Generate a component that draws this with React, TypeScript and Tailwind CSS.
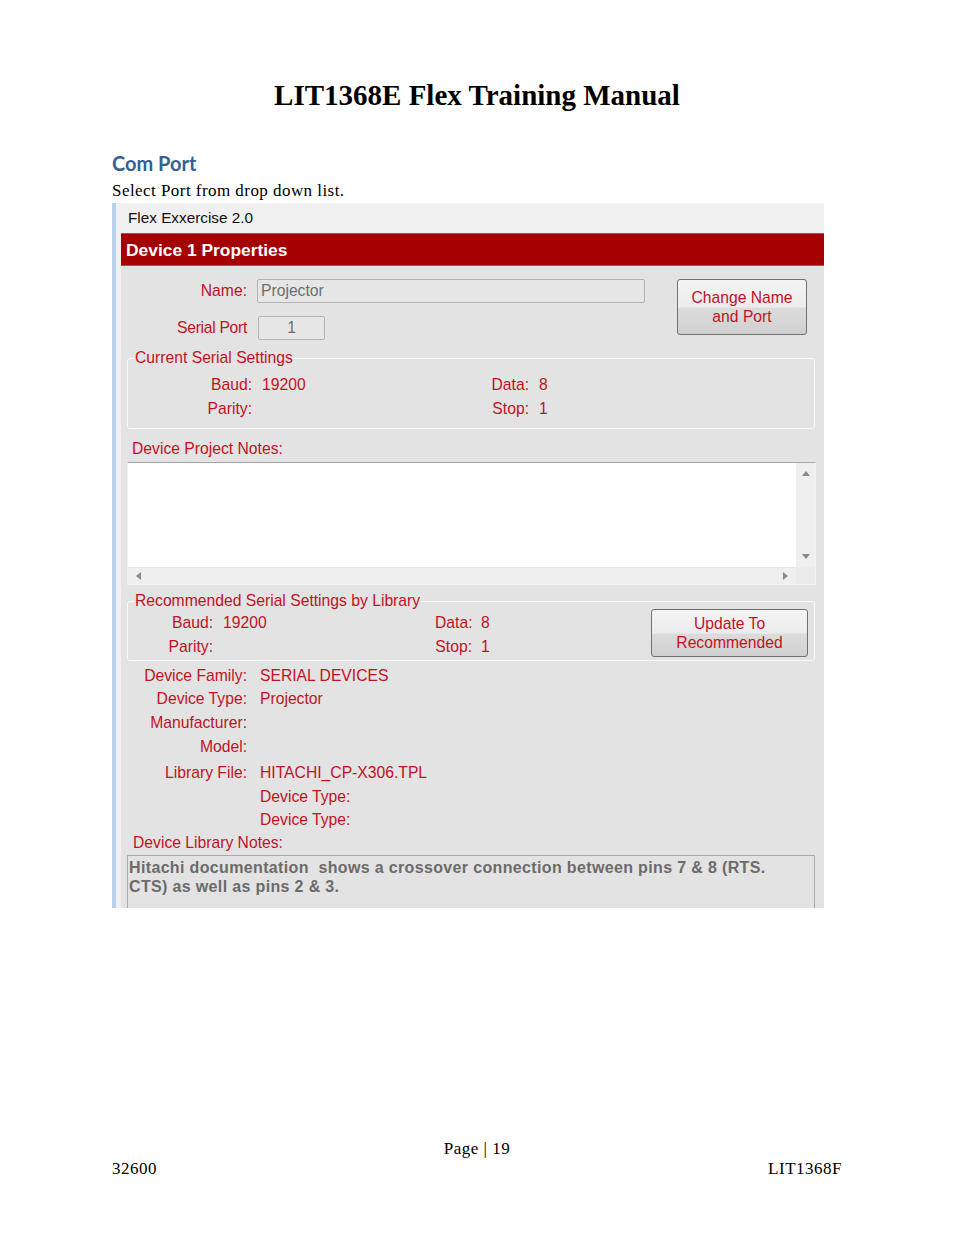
import React from "react";

const RED = "text-[#c1121f]";

function Row({ label, value, h = "h-[23.6px]" }: { label: string; value?: string; h?: string }) {
  return (
    <div className={`flex items-center ${h}`}>
      <div className={`w-[126px] text-right ${RED}`}>{label}</div>
      <div className={`ml-[13px] ${RED}`}>{value}</div>
    </div>
  );
}

function Tri({ dir }: { dir: "up" | "down" | "left" | "right" }) {
  const pts = {
    up: "0,5 4,0 8,5",
    down: "0,0 8,0 4,5",
    left: "5,0 5,8 0,4",
    right: "0,0 0,8 5,4",
  }[dir];
  const w = dir === "up" || dir === "down" ? 8 : 5;
  const h = dir === "up" || dir === "down" ? 5 : 8;
  return (
    <svg width={w} height={h} viewBox={`0 0 ${w} ${h}`}>
      <polygon points={pts} fill="#8a8a8a" />
    </svg>
  );
}

export default function App() {
  return (
    <div className="w-[954px] h-[1235px] bg-white flex flex-col font-['Liberation_Serif',serif] text-black">
      <h1 className="pt-[77px] text-center text-[29px] leading-[36px] font-bold">
        LIT1368E Flex Training Manual
      </h1>
      <h2 className="mt-[38px] ml-[112px] text-[20px] leading-[24px] font-bold text-[#365f91] font-['Lato',sans-serif]">
        Com Port
      </h2>
      <p className="mt-[5px] ml-[112px] text-[17px] leading-[21px] tracking-[0.45px]">Select Port from drop down list.</p>

      {/* Screenshot panel */}
      <div className="mt-[2px] ml-[112px] w-[712px] h-[705px] flex font-['Liberation_Sans',sans-serif] text-[15.7px] leading-[18px] overflow-hidden">
        <div className="w-[4px] bg-[#b9d1ea]" />
        <div className="flex-1 flex flex-col">
          <div className="h-[30px] bg-[#f0f0f0] flex items-center pl-[12px] text-[#111] text-[15.3px]">
            Flex Exxercise 2.0
          </div>
          <div className="flex-1 flex min-h-0">
            <div className="w-[5px] bg-[#f0f0f0]" />
            <div className="flex-1 flex flex-col min-h-0">
              <div className="h-[33px] bg-[#a50000] border-y border-[#6a6a6a] flex items-center pl-[5px] text-white font-bold text-[17.4px]">
                Device 1 Properties
              </div>
              <div className="flex-1 bg-[#e3e3e3] flex flex-col min-h-0">
                {/* Name & port */}
                <div className="pt-[13px] flex items-start">
                  <div className="flex flex-col">
                    <div className="flex items-center h-[24px]">
                      <div className={`w-[126px] text-right ${RED}`}>Name:</div>
                      <div className="ml-[10px] w-[388px] h-[24px] border border-[#b3b3b3] bg-[#e6e6e6] rounded-[2px] flex items-center pl-[3px] text-[#6d6d6d]">
                        Projector
                      </div>
                    </div>
                    <div className="flex items-center h-[24px] mt-[13px]">
                      <div className={`w-[126px] text-right ${RED} tracking-[-0.3px]`}>Serial Port</div>
                      <div className="ml-[11px] w-[67px] h-[24px] border border-[#b3b3b3] bg-[#e6e6e6] rounded-[2px] flex items-center justify-center text-[#6d6d6d]">
                        1
                      </div>
                    </div>
                  </div>
                  <button className={`ml-[32px] w-[130px] h-[56px] border border-[#707070] rounded-[3px] bg-[linear-gradient(#f4f4f4_0%,#ececec_50%,#dcdcdc_52%,#d0d0d0_100%)] ${RED} leading-[19px] text-[15.7px]`}>
                    Change Name
                    <br />
                    and Port
                  </button>
                </div>

                {/* Current Serial Settings */}
                <fieldset className="mt-[9px] ml-[6px] w-[688px] border border-[#fafafa] rounded-[3px] pb-[7px]">
                  <legend className={`ml-[6px] px-[1px] ${RED}`}>Current Serial Settings</legend>
                  <div className="pt-[6px]">
                    <div className="flex items-center h-[24px]">
                      <div className={`w-[124px] text-right ${RED}`}>Baud:</div>
                      <div className={`ml-[10px] w-[220px] ${RED}`}>19200</div>
                      <div className={`w-[47px] text-right ${RED}`}>Data:</div>
                      <div className={`ml-[10px] ${RED}`}>8</div>
                    </div>
                    <div className="flex items-center h-[24px]">
                      <div className={`w-[124px] text-right ${RED}`}>Parity:</div>
                      <div className="ml-[10px] w-[220px]" />
                      <div className={`w-[47px] text-right ${RED}`}>Stop:</div>
                      <div className={`ml-[10px] ${RED}`}>1</div>
                    </div>
                  </div>
                </fieldset>

                <div className={`mt-[11px] ml-[11px] ${RED}`}>Device Project Notes:</div>

                {/* Notes box */}
                <div className="mt-[4px] ml-[6px] w-[689px] h-[123px] border border-[#f2f2f2] border-t-[#a6a6a6] flex flex-col shrink-0">
                  <div className="flex-1 flex">
                    <div className="flex-1 bg-white" />
                    <div className="w-[19px] bg-[#efefef] flex flex-col items-center justify-between py-[8px]">
                      <Tri dir="up" />
                      <Tri dir="down" />
                    </div>
                  </div>
                  <div className="h-[17px] flex">
                    <div className="flex-1 bg-[#efefef] flex items-center justify-between px-[8px] border-t border-[#e6e6e6]">
                      <Tri dir="left" />
                      <Tri dir="right" />
                    </div>
                    <div className="w-[19px] bg-[#ebebeb]" />
                  </div>
                </div>

                {/* Recommended */}
                <fieldset className="mt-[7px] ml-[6px] w-[688px] border border-[#fafafa] rounded-[3px] shrink-0">
                  <legend className={`ml-[6px] px-[1px] ${RED}`}>
                    Recommended Serial Settings by Library
                  </legend>
                  <div className="flex items-start h-[50px]">
                    <div className="flex flex-col pt-[1px]">
                      <div className="flex items-center h-[24px]">
                        <div className={`w-[85px] text-right ${RED}`}>Baud:</div>
                        <div className={`ml-[10px] w-[212px] ${RED}`}>19200</div>
                        <div className={`w-[37px] text-right ${RED}`}>Data:</div>
                        <div className={`ml-[9px] ${RED}`}>8</div>
                      </div>
                      <div className="flex items-center h-[24px]">
                        <div className={`w-[85px] text-right ${RED}`}>Parity:</div>
                        <div className="ml-[10px] w-[212px]" />
                        <div className={`w-[37px] text-right ${RED}`}>Stop:</div>
                        <div className={`ml-[9px] ${RED}`}>1</div>
                      </div>
                    </div>
                    <button className={`ml-auto mr-[6px] -mt-[1px] w-[157px] h-[48px] border border-[#707070] rounded-[3px] bg-[linear-gradient(#f4f4f4_0%,#ececec_50%,#dcdcdc_52%,#d0d0d0_100%)] ${RED} leading-[19px] text-[15.7px]`}>
                      Update To
                      <br />
                      Recommended
                    </button>
                  </div>
                </fieldset>

                {/* Device info */}
                <div className="mt-[3px] flex flex-col shrink-0">
                  <Row label="Device Family:" value="SERIAL DEVICES" />
                  <Row label="Device Type:" value="Projector" />
                  <Row label="Manufacturer:" />
                  <Row label="Model:" />
                  <Row label="Library File:" value="HITACHI_CP-X306.TPL" h="h-[23.6px] mt-[3px]" />
                  <Row label="" value="Device Type:" />
                  <Row label="" value="Device Type:" />
                </div>

                <div className={`mt-[2px] ml-[12px] ${RED}`}>Device Library Notes:</div>

                <div className="mt-[3px] ml-[6px] w-[688px] flex-1 border border-b-0 border-[#a9a9a9] pl-[1px] pt-[2px] text-[#6b6b6b] font-bold text-[16px] leading-[19px] tracking-[0.35px]">
                  Hitachi documentation&nbsp; shows a crossover connection between pins 7 &amp; 8 (RTS.
                  <br />
                  CTS) as well as pins 2 &amp; 3.
                </div>
              </div>
            </div>
          </div>
        </div>
      </div>

      {/* Footer */}
      <div className="mt-[231px] text-center text-[17px] leading-[20px] tracking-[0.5px]">Page | 19</div>
      <div className="flex justify-between ml-[112px] w-[730px] text-[17px] leading-[20px] tracking-[0.5px]">
        <span>32600</span>
        <span>LIT1368F</span>
      </div>
    </div>
  );
}
